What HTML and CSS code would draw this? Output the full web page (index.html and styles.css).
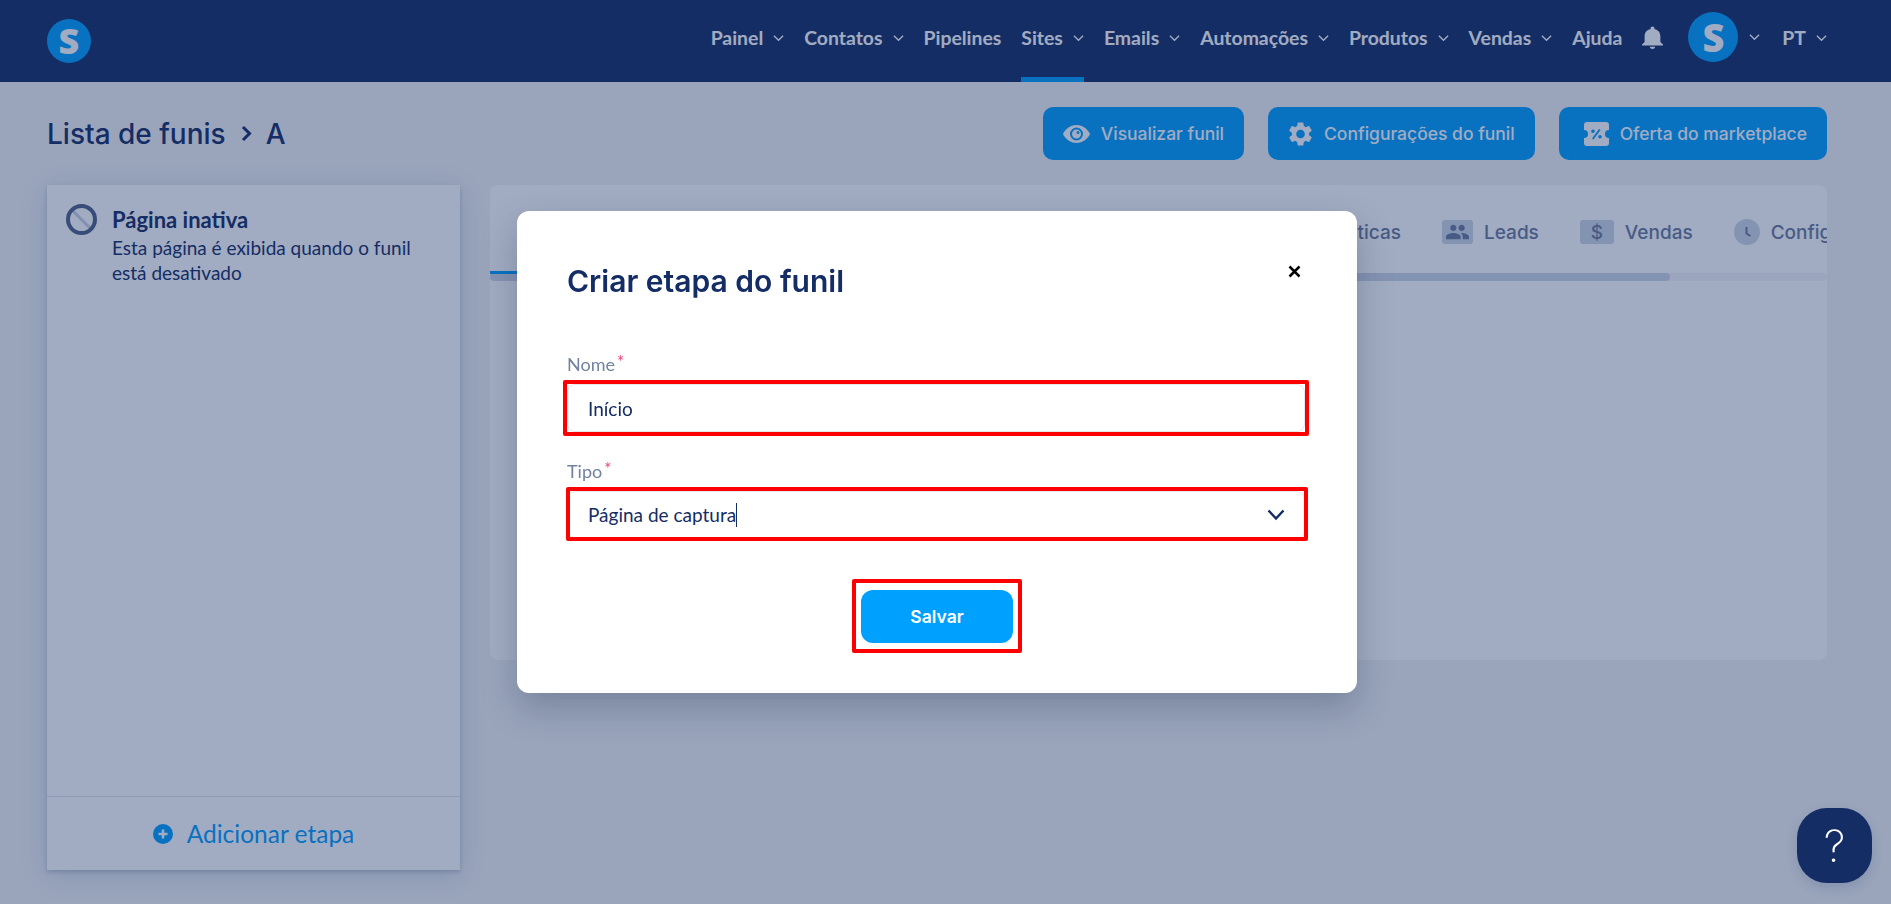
FILE: index.html
```html
<!DOCTYPE html>
<html lang="pt">
<head>
  <meta charset="UTF-8" />
  <title>Lista de funis</title>
  <link rel="stylesheet" href="styles.css">
</head>
<body>
  <header class="topbar">
    <div class="logo">S</div>
    <nav class="menu">
      <a class="menu-item">Painel <svg class="chev" viewBox="0 0 12 8"><path d="M1 1.5l5 5 5-5"/></svg></a>
      <a class="menu-item">Contatos <svg class="chev" viewBox="0 0 12 8"><path d="M1 1.5l5 5 5-5"/></svg></a>
      <a class="menu-item">Pipelines</a>
      <a class="menu-item active">Sites <svg class="chev" viewBox="0 0 12 8"><path d="M1 1.5l5 5 5-5"/></svg></a>
      <a class="menu-item">Emails <svg class="chev" viewBox="0 0 12 8"><path d="M1 1.5l5 5 5-5"/></svg></a>
      <a class="menu-item">Automações <svg class="chev" viewBox="0 0 12 8"><path d="M1 1.5l5 5 5-5"/></svg></a>
      <a class="menu-item">Produtos <svg class="chev" viewBox="0 0 12 8"><path d="M1 1.5l5 5 5-5"/></svg></a>
      <a class="menu-item">Vendas <svg class="chev" viewBox="0 0 12 8"><path d="M1 1.5l5 5 5-5"/></svg></a>
      <a class="menu-item">Ajuda</a>
      <svg class="bell" viewBox="4 2 16 20" preserveAspectRatio="none"><path d="M12 22c1.100 0 2-.9 2-2h-4c0 1.100.9 2 2 2zm6-6v-5c0-3.070-1.630-5.640-4.500-6.320V4c0-.83-.67-1.500-1.500-1.500s-1.500.67-1.500 1.500v.68C7.640 5.360 6 7.920 6 11v5l-2 2v1h16v-1l-2-2z"/></svg>
      <div class="avatar-wrap">
        <div class="avatar">S</div>
        <svg class="chev" viewBox="0 0 12 8"><path d="M1 1.500l5 5 5-5"/></svg>
      </div>
      <a class="menu-item lang">PT <svg class="chev" viewBox="0 0 12 8"><path d="M1 1.500l5 5 5-5"/></svg></a>
    </nav>
  </header>

  <main class="content">
    <div class="page-head">
      <h1 class="crumbs">
        <span>Lista de funis</span>
        <svg class="crumb-sep" viewBox="0 0 12 17"><path d="M3 2l6.500 6.500L3 15"/></svg>
        <span>A</span>
      </h1>
      <div class="actions">
        <button class="btn">
          <svg class="btn-icon" viewBox="0 0 27 18"><path fill-rule="evenodd" d="M13.500 0C20 0 25 4.500 27 9c-2 4.500-7 9-13.500 9S2 13.500 0 9C2 4.500 7 0 13.500 0zm0 2.500a6.500 6.500 0 1 0 0 13 6.500 6.500 0 0 0 0-13zm0 2a4.500 4.500 0 1 1 0 9 4.500 4.500 0 0 1 0-9zm1.500 1.500a1.500 1.500 0 1 0 0 3 1.500 1.500 0 0 0 0-3z"/></svg>
          Visualizar funil
        </button>
        <button class="btn">
          <svg class="btn-icon gear" viewBox="2.500 2 19 20"><path d="M19.140 12.940c.04-.3.06-.61.06-.94 0-.32-.02-.64-.07-.94l2.030-1.580c.18-.14.23-.41.12-.61l-1.920-3.320c-.12-.22-.37-.29-.59-.22l-2.390.96c-.5-.38-1.030-.7-1.620-.94l-.36-2.540c-.04-.24-.24-.41-.48-.41h-3.840c-.24 0-.43.17-.47.41l-.36 2.540c-.59.24-1.130.57-1.620.94l-2.390-.96c-.22-.08-.47 0-.59.22L2.740 8.870c-.12.21-.08.47.12.61l2.030 1.580c-.05.3-.09.63-.09.94s.02.64.07.94l-2.030 1.580c-.18.14-.23.41-.12.61l1.920 3.320c.12.22.37.29.59.22l2.390-.96c.5.38 1.030.7 1.620.94l.36 2.540c.05.24.24.41.48.41h3.840c.24 0 .44-.17.47-.41l.36-2.540c.59-.24 1.130-.56 1.620-.94l2.390.96c.22.08.47 0 .59-.22l1.920-3.320c.12-.22.07-.47-.12-.61l-2.010-1.580zM12 15.600c-1.980 0-3.600-1.620-3.600-3.600s1.620-3.600 3.600-3.600 3.600 1.620 3.600 3.600-1.620 3.600-3.600 3.600z"/></svg>
          Configurações do funil
        </button>
        <button class="btn btn-offer">
          <svg class="btn-icon gear" viewBox="0 0 25 24"><path fill-rule="evenodd" d="M3 0h19a3 3 0 0 1 3 3v5a4 4 0 0 0 0 8v5a3 3 0 0 1-3 3H3a3 3 0 0 1-3-3v-5a4 4 0 0 0 0-8V3a3 3 0 0 1 3-3zm12 7l-7 9.500 1.500 1 7-9.500zM9 7.500a1.800 1.800 0 1 0 0 3.600 1.800 1.800 0 0 0 0-3.600zm7 5.500a1.800 1.800 0 1 0 0 3.600 1.800 1.800 0 0 0 0-3.600z"/></svg>
          Oferta do marketplace
        </button>
      </div>
    </div>

    <div class="columns">
      <aside class="sidebar">
        <div class="step">
          <svg class="ban" viewBox="0 0 31 31"><path class="ban-line" d="M6 6l19 19"/><circle cx="15.500" cy="15.500" r="13.500"/></svg>
          <div>
            <div class="step-title">Página inativa</div>
            <p class="step-text">Esta página é exibida quando o funil está desativado</p>
          </div>
        </div>
        <div class="add-step">
          <svg class="plus" viewBox="0 0 20 20"><circle cx="10" cy="10" r="10"/><path d="M10 5.500v9M5.500 10h9"/></svg>
          Adicionar etapa
        </div>
      </aside>

      <section class="panel">
        <div class="tabs">
          <div class="tab tab-first"></div>
          <div class="tab tab-stats">Estatísticas</div>
          <div class="tab"><span class="tab-icon"><svg viewBox="1 5 22 14"><path d="M16 11c1.660 0 2.990-1.340 2.990-3S17.660 5 16 5c-1.660 0-3 1.340-3 3s1.340 3 3 3zm-8 0c1.660 0 2.990-1.340 2.990-3S9.660 5 8 5C6.340 5 5 6.340 5 8s1.340 3 3 3zm0 2c-2.330 0-7 1.170-7 3.500V19h14v-2.500c0-2.330-4.670-3.500-7-3.500zm8 0c-.29 0-.62.02-.97.05 1.160.84 1.970 1.970 1.970 3.450V19h6v-2.500c0-2.330-4.670-3.500-7-3.500z"/></svg></span>Leads</div>
          <div class="tab"><span class="tab-icon tab-icon-money">$</span>Vendas</div>
          <div class="tab"><span class="tab-clock"><svg viewBox="0 0 26 26"><path d="M12.500 8v6.500l4 2.500"/></svg></span>Configurações</div>
        </div>
        <div class="tabs-scroll"><div class="tabs-thumb"></div></div>
      </section>
    </div>
  </main>

  <div class="overlay">
    <div class="modal">
      <div class="modal-head">
        <h2 class="modal-title">Criar etapa do funil</h2>
        <svg class="close" viewBox="0 0 13 13"><path d="M1.500 1.500l10 10M11.500 1.500l-10 10"/></svg>
      </div>
      <div class="field">
        <label class="field-label">Nome<span class="req">*</span></label>
        <div class="field-box">
          <input class="field-input" type="text" value="Início" />
          <span class="mark mark-name"></span>
        </div>
      </div>
      <div class="field">
        <label class="field-label">Tipo<span class="req">*</span></label>
        <div class="field-box">
          <div class="field-input field-select">
            <span class="select-value">Página de captura</span>
            <svg class="select-chev" viewBox="0 0 18 12"><path d="M1.500 1.500L9 9.500l7.500-8"/></svg>
          </div>
          <span class="mark mark-type"></span>
        </div>
      </div>
      <div class="modal-foot">
        <div class="field-box">
          <button class="save">Salvar</button>
          <span class="mark mark-save"></span>
        </div>
      </div>
    </div>
  </div>

  <button class="help">?</button>
</body>
</html>
```

FILE: styles.css
```css
* {
  box-sizing: border-box;
}
body {
  margin: 0;
  height: 100vh;
  overflow: hidden;
  font-family: Lato, "Open Sans", sans-serif;
  background: #f3f5f7;
  color: #142d65;
}

/* top bar */
.topbar {
  height: 82px;
  background: #142d65;
  display: flex;
  align-items: center;
  justify-content: space-between;
  padding: 0 64px 0 47px;
}
.logo {
  width: 44px;
  height: 44px;
  border-radius: 50%;
  background: #00a0ff;
  color: #fff;
  font: 800 36px/44px "Open Sans", sans-serif;
  text-align: center;
}
.menu {
  display: flex;
  align-items: center;
  gap: 20px;
  height: 100%;
}
.menu-item {
  height: 100%;
  display: flex;
  align-items: center;
  gap: 10px;
  padding-bottom: 7px;
  color: #fff;
  font-size: 19.400px;
  font-weight: 700;
  border-bottom: 5px solid transparent;
  border-top: 5px solid transparent;
  white-space: nowrap;
}
.menu-item.active {
  border-bottom-color: #00a0ff;
}
.chev {
  width: 11px;
  height: 8px;
  fill: none;
  stroke: #fff;
  stroke-width: 1.500;
}
.bell {
  width: 21px;
  height: 23px;
  margin-bottom: 8px;
  fill: #fff;
}
.avatar-wrap {
  display: flex;
  align-items: center;
  gap: 11px;
  margin: 0 2px 8px 5px;
}
.avatar {
  width: 50px;
  height: 50px;
  border-radius: 50%;
  background: #00a0ff;
  color: #fff;
  font: 800 38px/50px "Open Sans", sans-serif;
  text-align: center;
}

/* page */
.content {
  padding: 25px 64px 0 47px;
}
.page-head {
  display: flex;
  align-items: center;
  justify-content: space-between;
  height: 53px;
  margin-bottom: 25px;
}
.crumbs {
  margin: 0;
  display: flex;
  align-items: center;
  gap: 14px;
  font: 500 28px Inter, sans-serif;
}
.crumb-sep {
  width: 12px;
  height: 17px;
  fill: none;
  stroke: #142d65;
  stroke-width: 3;
}
.actions {
  display: flex;
  gap: 24px;
}
.btn {
  height: 53px;
  padding: 0 20px;
  display: flex;
  align-items: center;
  gap: 11px;
  border: none;
  border-radius: 10px;
  background: #00a0ff;
  color: #fff;
  font: 500 17.500px Inter, sans-serif;
  white-space: nowrap;
}
.btn-offer .btn-icon {
  margin-left: 5px;
}
.btn-icon {
  width: 27px;
  height: 18px;
  fill: #fff;
}
.btn-icon.gear {
  width: 25px;
  height: 24px;
}
.columns {
  display: grid;
  grid-template-columns: 413px 1fr;
  gap: 30px;
  align-items: start;
}
.sidebar {
  height: 685px;
  background: #fff;
  display: flex;
  flex-direction: column;
  justify-content: space-between;
  box-shadow: 0 2px 4px rgba(20,45,101,0.2), 0 5px 25px rgba(20,45,101,0.15);
}
.step {
  display: flex;
  gap: 15px;
  padding: 22px 19px 0;
}
.ban {
  width: 31px;
  height: 31px;
  flex: none;
  margin-top: -3px;
  fill: none;
  stroke: #4f6285;
  stroke-width: 4;
}
.ban .ban-line {
  stroke: #c9d3e4;
  stroke-width: 3;
}
.step-title {
  font-size: 22px;
  font-weight: 700;
  line-height: 26px;
}
.step-text {
  margin: 2px 0 0;
  font-size: 19px;
  line-height: 25px;
}
.add-step {
  height: 74px;
  border-top: 1px solid #e3e7ee;
  display: flex;
  align-items: center;
  justify-content: center;
  gap: 14px;
  color: #00a0ff;
  font-size: 24.500px;
}
.plus {
  width: 20px;
  height: 20px;
  fill: #00a0ff;
}
.plus path {
  stroke: #fff;
  stroke-width: 2.500;
}
.panel {
  height: 475px;
  background: #fff;
  border-radius: 8px;
  overflow: hidden;
}
.tabs {
  height: 88px;
  padding-top: 6px;
  display: flex;
  align-items: center;
  gap: 41px;
  white-space: nowrap;
  font: 500 19px Inter, sans-serif;
  color: #6a7a9c;
}
.tab {
  flex: none;
  display: flex;
  align-items: center;
  gap: 11px;
}
.tab-first {
  width: 640px;
  height: 3px;
  align-self: flex-end;
  margin-bottom: -1px;
  background: #00a0ff;
}
.tab-stats {
  width: 230px;
  justify-content: flex-end;
}
.tab-icon {
  height: 24px;
  width: 31px;
  padding: 0 4px;
  border-radius: 3px;
  background: #ced8e6;
  display: flex;
  align-items: center;
  justify-content: center;
}
.tab-icon svg {
  width: 24px;
  height: 16px;
  fill: #6a7a9c;
}
.tab-icon-money {
  width: 34px;
}
.tab-clock {
  width: 26px;
  height: 26px;
  border-radius: 50%;
  background: #ced8e6;
}
.tab-clock svg {
  display: block;
  fill: none;
  stroke: #6a7a9c;
  stroke-width: 2;
}
.tabs-scroll {
  height: 8px;
  background: #f5f6f9;
  border-radius: 4px;
}
.tabs-thumb {
  width: 1180px;
  height: 8px;
  background: #ced8e6;
  border-radius: 4px;
}

/* modal */
.overlay {
  position: fixed;
  inset: 0;
  padding-right: 17px;
  background: rgba(20,45,101,0.4);
  display: flex;
  justify-content: center;
  align-items: flex-start;
}
.modal {
  width: 840px;
  height: 482px;
  margin-top: 211px;
  padding: 50px 52px 50px 50px;
  background: #fff;
  border-radius: 12px;
  box-shadow: 0 15px 35px rgba(20,30,60,0.25);
}
.modal-head {
  display: flex;
  justify-content: space-between;
  margin-bottom: 51px;
}
.modal-title {
  margin: 0;
  font: 600 30px/40px Inter, sans-serif;
}
.close {
  width: 13px;
  height: 13px;
  margin: 4px 4px 0 0;
  fill: none;
  stroke: #000;
  stroke-width: 2.500;
}
.field {
  margin-bottom: 27px;
}
.field-label {
  display: block;
  margin-bottom: 8px;
  color: #7183a1;
  font-size: 18px;
  line-height: 24px;
}
.req {
  color: #f0427a;
  font-size: 17px;
  line-height: 0;
  vertical-align: 3px;
  margin-left: 2px;
}
.field-box {
  position: relative;
}
.field-input {
  display: block;
  width: 100%;
  height: 48px;
  padding: 0 19px 0 20px;
  border: 1px solid #e3e8ee;
  border-radius: 8px;
  background: #fff;
  color: #142d65;
  font-family: inherit;
  font-size: 19px;
}
.field-select {
  display: flex;
  align-items: center;
  justify-content: space-between;
}
.select-value {
  border-right: 1px solid #142d65;
  line-height: 24px;
}
.select-chev {
  width: 18px;
  height: 12px;
  fill: none;
  stroke: #142d65;
  stroke-width: 2.500;
}
.mark {
  position: absolute;
  border: 4px solid #f00;
  border-radius: 2px;
  pointer-events: none;
}
.mark-name {
  inset: -4px;
}
.mark-type {
  inset: -4px -3px -2px -1px;
}
.mark-save {
  inset: -11px -9px -10px -9px;
}
.modal-foot {
  display: flex;
  justify-content: center;
  margin-top: 51px;
  padding-left: 2px;
}
.save {
  display: block;
  width: 152px;
  height: 53px;
  border: none;
  border-radius: 12px;
  background: #00a0ff;
  color: #fff;
  font: 600 17.500px Inter, sans-serif;
}
.help {
  position: fixed;
  right: 19px;
  bottom: 21px;
  width: 75px;
  height: 75px;
  border: none;
  border-radius: 30px;
  background: #142d65;
  color: #fff;
  font: 200 44px Inter, sans-serif;
  box-shadow: 0 5px 12px rgba(20,45,101,0.15);
}
```
